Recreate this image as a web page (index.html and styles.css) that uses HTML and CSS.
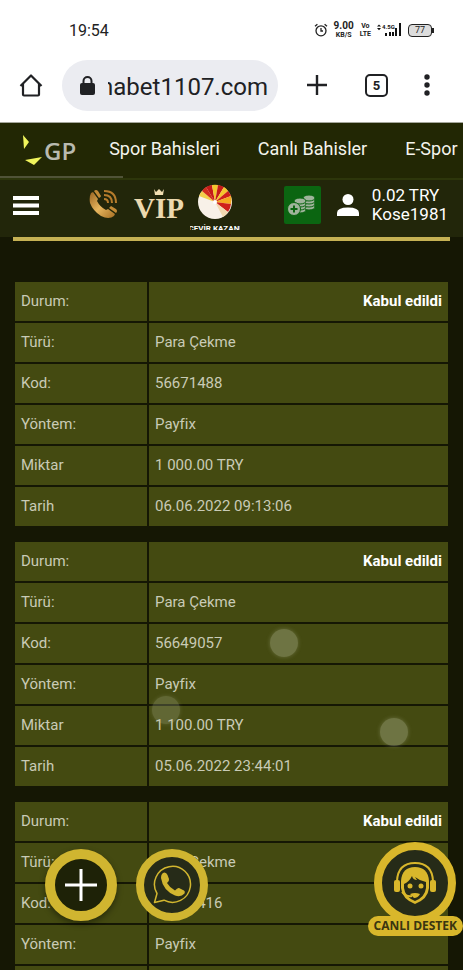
FILE: index.html
```
<!DOCTYPE html>
<html lang="tr">
<head>
    <meta charset="UTF-8">
    <meta name="viewport" content="width=device-width, initial-scale=1.0">
    <title>İşlem Geçmişi</title>
    <link rel="stylesheet" href="styles.css">
</head>
<body>
    <!-- Phone status bar -->
    <div class="status-bar">
        <span class="clock">19:54</span>
        <div class="status-icons">
            <svg class="alarm" viewBox="0 0 14 14" width="14" height="14" fill="none" stroke="#222" stroke-width="1.3">
                <circle cx="7" cy="7.8" r="5"/>
                <path d="M7 5v3h2M1 3.2 3.4 1.2M13 3.2 10.6 1.2"/>
            </svg>
            <div class="stack"><b>9.00</b><small>KB/S</small></div>
            <div class="stack lte"><small>Vo</small><small>LTE</small></div>
            <div class="signal">
                <svg viewBox="0 0 25 14" width="25" height="14" fill="#111">
                    <path d="M0 3.6 2 1.4 4 3.6ZM0 5 2 7.2 4 5ZM8 10h2v3H8zM12 9h2v4h-2zM15 9h2v4h-2zM18 5h2v8h-2zM22 0h2v13h-2z"/>
                    <text x="5" y="6" font-size="6" font-weight="700">4.5G</text>
                </svg>
            </div>
            <div class="battery">77</div>
        </div>
    </div>

    <!-- Browser toolbar -->
    <div class="browser-bar">
        <button class="icon-button home" aria-label="Home">
            <svg viewBox="0 0 24 24" width="24" height="24" fill="none" stroke="#202124" stroke-width="2.2" stroke-linejoin="round">
                <path d="M1.5 13 12 2.5 22.5 13M4 11v10.5q0 1 1 1h14q1 0 1-1V11"/>
            </svg>
        </button>
        <label class="url-box">
            <svg viewBox="0 0 15 19" width="15" height="19">
                <rect y="7" width="15" height="12" rx="2" fill="#202124"/>
                <path d="M3.5 8V5a4 4 0 0 1 8 0v3" fill="none" stroke="#202124" stroke-width="2"/>
            </svg>
            <span class="url-clip"><input class="url-input" type="text" value="nabet1107.com" aria-label="Address" readonly></span>
        </label>
        <button class="icon-button add" aria-label="New tab">
            <svg viewBox="0 0 22 22" width="22" height="22" stroke="#202124" stroke-width="2.4"><path d="M11 1v20M1 11h20"/></svg>
        </button>
        <button class="tab-count" aria-label="Tabs">5</button>
        <button class="icon-button more" aria-label="More">
            <svg viewBox="0 0 6 22" width="6" height="22" fill="#202124"><circle cx="3" cy="3" r="2.7"/><circle cx="3" cy="11" r="2.7"/><circle cx="3" cy="19" r="2.7"/></svg>
        </button>
    </div>

    <!-- Site navigation -->
    <nav class="site-nav">
        <a class="logo" href="#">
            <svg viewBox="0 0 19 32" width="19" height="32" fill="#f0f45c">
                <path d="M0 1 6 8 1 15ZM2 26 19 23 11 31Z"/>
            </svg>
            <span>GP</span>
        </a>
        <a href="#">Spor Bahisleri</a>
        <a href="#">Canlı Bahisler</a>
        <a href="#">E-Spor</a>
    </nav>

    <header class="site-header">
        <button class="icon-button menu" aria-label="Menü">
            <svg viewBox="0 0 26 19" width="26" height="19" fill="#fff"><path d="M0 0h26v4H0zM0 7.500h26v4H0zM0 15h26v4H0z"/></svg>
        </button>
        <div class="promo">
            <a class="phone" href="#" aria-label="Telefon">
                <svg viewBox="0 0 29 30" width="29" height="30">
                    <defs><linearGradient id="gold" x2="1" y2="1"><stop stop-color="#9a6420"/><stop offset=".5" stop-color="#e6b55e"/><stop offset="1" stop-color="#a66e22"/></linearGradient></defs>
                    <path d="M2 4 4 3 9 10 8 12Q11 18 17 21L19 20 26 25 25 27Q20 31 12 27 4 22 1 14 0 8 2 4Z" fill="url(#gold)"/>
                    <path d="M5 2q2-2 4 0l3 5q0 1-2 2ZM20 19l2-2 5 3q2 2 0 4Z" fill="#c28a36"/>
                    <path d="M15 10q4 0 4 4M15 6q8 0 8 8M15 2q12 0 12 12" fill="none" stroke="#b67c2c" stroke-width="2"/>
                </svg>
            </a>
            <a class="vip" href="#">
                <svg viewBox="0 0 12 6" width="12" height="6" fill="#f2dfb2"><path d="M1 0 3 3 6 0 9 3 11 0 10 6H2Z"/></svg>
                <span>VIP</span>
            </a>
            <a class="wheel" href="#">
                <svg viewBox="0 0 36 36" width="36" height="36">
                    <circle cx="18" cy="18" r="17" fill="#f8f1e8"/>
                    <path d="M18 18 2 12A17 17 0 0 1 5 7Z" fill="#f3cf4a"/>
                    <path d="M18 18 5 7A17 17 0 0 1 9 3Z" fill="#d22c1c"/>
                    <path d="M18 18 9 3A17 17 0 0 1 15 1Z" fill="#c51a18"/>
                    <path d="M18 18 15 1A17 17 0 0 1 21 1Z" fill="#f5c52c"/>
                    <path d="M18 18 21 1A17 17 0 0 1 27 3Z" fill="#c51a18"/>
                    <path d="M18 18 27 3A17 17 0 0 1 31 7Z" fill="#f5c52c"/>
                    <path d="M18 18 31 7A17 17 0 0 1 34 12Z" fill="#cf1f1a"/>
                    <path d="M18 18 34 12A17 17 0 0 1 34 20Z" fill="#f5a91f"/>
                    <path d="M18 18 34 20A17 17 0 0 1 31 28Z" fill="#cf1f1a"/>
                    <path d="M18 18 31 28A17 17 0 0 1 26 33Z" fill="#f2d9b0"/>
                    <circle cx="18" cy="18" r="2" fill="#fff"/>
                </svg>
                <span>ÇEVİR KAZAN!</span>
            </a>
        </div>
        <button class="deposit" aria-label="Para Yatır">
            <svg viewBox="0 0 30 22" width="30" height="22" fill="#9fb49b">
                <g stroke="#0b6511" stroke-width="1">
                    <ellipse cx="22" cy="13" rx="6" ry="3"/><ellipse cx="22" cy="10" rx="6" ry="3"/><ellipse cx="22" cy="7" rx="6" ry="3"/><ellipse cx="22" cy="4" rx="6" ry="3"/>
                    <ellipse cx="13" cy="16" rx="6" ry="3"/><ellipse cx="13" cy="13" rx="6" ry="3"/><ellipse cx="13" cy="10" rx="6" ry="3"/><ellipse cx="13" cy="7" rx="6" ry="3"/>
                    <circle cx="7" cy="15" r="6.500"/>
                </g>
                <path d="M7 11.500v7M3.500 15h7" stroke="#0b6511" stroke-width="2"/>
            </svg>
        </button>
        <a class="account" href="#">
            <svg viewBox="0 0 22 22" width="22" height="22" fill="#fff"><circle cx="11" cy="5.500" r="5.500"/><path d="M0 22v-3q0-5.500 11-5.500T22 19v3Z"/></svg>
            <span>0.02 TRY<br>Kose1981</span>
        </a>
    </header>

    <!-- Transaction history -->
    <main class="history">
        <table class="transaction">
            <tr><th>Durum:</th><td class="state">Kabul edildi</td></tr>
            <tr><th>Türü:</th><td>Para Çekme</td></tr>
            <tr><th>Kod:</th><td>56671488</td></tr>
            <tr><th>Yöntem:</th><td>Payfix</td></tr>
            <tr><th>Miktar</th><td>1 000.00 TRY</td></tr>
            <tr><th>Tarih</th><td>06.06.2022 09:13:06</td></tr>
        </table>
        <table class="transaction">
            <tr><th>Durum:</th><td class="state">Kabul edildi</td></tr>
            <tr><th>Türü:</th><td>Para Çekme</td></tr>
            <tr><th>Kod:</th><td>56649057</td></tr>
            <tr><th>Yöntem:</th><td>Payfix</td></tr>
            <tr><th>Miktar</th><td>1 100.00 TRY</td></tr>
            <tr><th>Tarih</th><td>05.06.2022 23:44:01</td></tr>
        </table>
        <table class="transaction">
            <tr><th>Durum:</th><td class="state">Kabul edildi</td></tr>
            <tr><th>Türü:</th><td>Para Çekme</td></tr>
            <tr><th>Kod:</th><td>56640416</td></tr>
            <tr><th>Yöntem:</th><td>Payfix</td></tr>
            <tr><th></th><td></td></tr>
        </table>
    </main>

    <!-- Drifting particles -->
    <i class="particle particle-a"></i>
    <i class="particle particle-b"></i>
    <i class="particle particle-c"></i>

    <!-- Floating buttons -->
    <button class="float-button float-add" aria-label="Aç">
        <svg viewBox="0 0 32 32" width="32" height="32" stroke="#fff" stroke-width="3"><path d="M16 0v32M0 16h32"/></svg>
    </button>
    <a class="float-button float-whatsapp" href="#" aria-label="WhatsApp">
        <svg viewBox="0 0 40 40" width="40" height="40">
            <path d="M2.500 37.500 5 28.500A18 18 0 1 1 12 35.200Z" fill="none" stroke="#d2b62f" stroke-width="1.500" stroke-linejoin="round"/>
            <path d="M9 13Q9 8 12.500 7.500 14.500 7.500 15.500 10L17 14Q17.500 16 15 18 18 23 23 25.500 25.500 22.500 27 23L32 25.500Q33.500 26.500 32.500 28.500 29 32.500 23 30.500 11 25.500 9 13Z" fill="#d2b62f"/>
        </svg>
    </a>
    <a class="support" href="#">
        <span class="support-ring">
            <svg viewBox="0 0 44 44" width="44" height="44" fill="#d9b72b">
                <path d="M4 20Q5 2 22 2T40 20" fill="none" stroke="#d9b72b" stroke-width="2"/>
                <path d="M8 20Q9 6 22 6T36 20V27Q35 38 22 43 9 38 8 27Z"/>
                <path d="M11 23Q16 21 19 15 20 19 24 19L22 16Q27 20 33 21V27Q32 36 22 40 12 36 11 27Z" fill="#262b18"/>
                <rect x="1" y="19" width="6" height="12" rx="2"/>
                <rect x="37" y="19" width="6" height="12" rx="2"/>
                <circle cx="17" cy="25" r="2.500"/>
                <circle cx="28" cy="25" r="2.500"/>
                <path d="M9 31q4 5 10 4" fill="none" stroke="#d9b72b" stroke-width="2"/>
                <path d="M17 33Q22 31 27 33 25 37 21 37Z"/>
            </svg>
        </span>
        <span class="support-label">CANLI DESTEK</span>
    </a>
</body>
</html>
```
FILE: styles.css
```
:root {
    --gold: #d0b530;
    --nav-bg: #222704;
    --cell-bg: #444a11;
    --page-bg: #151704;
}

* {
    box-sizing: border-box;
}

body {
    margin: 0;
    height: 100vh;
    display: flex;
    flex-direction: column;
    overflow: hidden;
    position: relative;
    font-family: Roboto, sans-serif;
    background: var(--page-bg);
}

a {
    color: inherit;
    text-decoration: none;
}

button {
    padding: 0;
    border: none;
    background: none;
    font-family: inherit;
    cursor: pointer;
}

svg {
    display: block;
    flex: none;
}

/* Status bar */
.status-bar {
    flex: none;
    height: 60px;
    padding: 0 31px 0 69px;
    display: flex;
    align-items: center;
    justify-content: space-between;
    background: #fff;
    color: #222;
}

.clock {
    font-size: 16px;
}

.status-icons {
    display: flex;
    align-items: center;
    gap: 6px;
}

.stack {
    display: flex;
    flex-direction: column;
    align-items: center;
}

.stack b {
    font-size: 10px;
    line-height: 10px;
}

.stack small {
    font-size: 7px;
    font-weight: 700;
    line-height: 8px;
}

.battery {
    position: relative;
    width: 24px;
    height: 13px;
    border: 1px solid #222;
    border-radius: 4px;
    background: #ddd;
    font-size: 9px;
    line-height: 11px;
    text-align: center;
}

.battery::after {
    content: '';
    position: absolute;
    right: -3px;
    top: 3px;
    width: 2px;
    height: 5px;
    background: #222;
}

/* Browser toolbar */
.browser-bar {
    flex: none;
    height: 63px;
    padding: 0 33px 12px 19px;
    display: flex;
    align-items: center;
    background: #fff;
    border-bottom: 1px solid #a5a79c;
}

.url-box {
    flex: 1;
    min-width: 0;
    height: 51px;
    margin: 0 28px 0 19px;
    padding: 0 10px 0 18px;
    display: flex;
    align-items: center;
    gap: 13px;
    border-radius: 26px;
    background: #ebecf1;
}

.url-clip {
    flex: 1;
    min-width: 0;
    display: flex;
    justify-content: flex-end;
    overflow: hidden;
}

.url-input {
    flex: none;
    width: 172px;
    padding: 3px 0 0;
    border: none;
    outline: none;
    background: none;
    color: #202124;
    font-family: inherit;
    font-size: 24px;
    text-align: right;
}

.tab-count {
    width: 23px;
    height: 23px;
    margin: 0 48px 0 37px;
    margin-right: 36px;
    border: 2px solid #202124;
    border-radius: 5px;
    color: #202124;
    font-size: 13px;
    font-weight: 700;
    line-height: 19px;
}

/* Navigation */
.site-nav {
    flex: none;
    height: 57px;
    position: relative;
    padding: 0 0 4px 23px;
    display: flex;
    align-items: center;
    gap: 38px;
    overflow: hidden;
    background: var(--nav-bg);
    border-bottom: 2px solid #2d360b;
    color: #f4f4ec;
    font-size: 18px;
    white-space: nowrap;
}

.site-nav::after {
    content: '';
    position: absolute;
    left: 0;
    bottom: 0;
    width: 123px;
    height: 2px;
    background: #505337;
}

.logo {
    display: flex;
    align-items: center;
    gap: 2px;
    margin-right: -5px;
    padding-top: 3px;
    color: #b8bab0;
    font-family: "Open Sans", sans-serif;
    font-size: 24px;
    font-weight: 600;
}

.site-header {
    flex: none;
    height: 57px;
    padding: 0 15px 7px 13px;
    display: flex;
    align-items: center;
    background: #22260a;
    color: #fff;
}

.promo {
    display: flex;
    align-items: flex-start;
    height: 50px;
    margin: 0 auto 0 50px;
}

.phone {
    margin-top: 9px;
}

.vip {
    display: flex;
    flex-direction: column;
    align-items: center;
    margin: 9px 6px 0 16px;
    font-family: "Liberation Serif", serif;
    font-size: 29px;
    font-weight: 700;
    line-height: 26px;
    color: #ecd9af;
}

.wheel {
    display: flex;
    flex-direction: column;
    align-items: center;
    width: 50px;
    height: 46px;
    margin-top: 4px;
    overflow: hidden;
    font-size: 8px;
    font-weight: 700;
    white-space: nowrap;
}

.wheel span {
    margin-top: 4px;
}

.deposit {
    display: flex;
    align-items: center;
    justify-content: center;
    width: 37px;
    height: 38px;
    margin-right: 16px;
    border-radius: 2px;
    background: #0b6511;
}

.account {
    display: flex;
    align-items: center;
    gap: 13px;
    font-size: 17px;
    line-height: 19px;
}

/* History */
.history {
    flex: 1;
    min-height: 0;
    margin: 0 13px;
    padding-top: 39px;
    border-top: 4px solid #c5b154;
    overflow: auto;
    scrollbar-width: none;
}

.transaction {
    width: 100%;
    margin-bottom: 12px;
    border-spacing: 2px;
    table-layout: fixed;
    color: #c9cbb6;
    font-size: 15px;
    line-height: 19px;
}

.transaction th,
.transaction td {
    height: 39px;
    padding: 10px 6px;
    background: var(--cell-bg);
    font-weight: 400;
    text-align: left;
}

.transaction th {
    width: 132px;
}

.transaction .state {
    color: #fff;
    font-weight: 700;
    text-align: right;
}

/* Particles */
.particle {
    position: absolute;
    width: 28px;
    height: 28px;
    border-radius: 50%;
    background: rgba(190, 195, 160, 0.35);
    box-shadow: 0 0 4px rgba(190, 195, 160, 0.3);
    pointer-events: none;
}

.particle-a {
    left: 270px;
    top: 629px;
}

.particle-b {
    left: 152px;
    top: 696px;
    opacity: 0.7;
}

.particle-c {
    left: 380px;
    top: 718px;
}

/* Floating buttons */
.float-button {
    position: absolute;
    bottom: 49px;
    width: 72px;
    height: 72px;
    display: flex;
    align-items: center;
    justify-content: center;
    border: 8px solid var(--gold);
    border-radius: 50%;
    background: #262b18;
}

.float-add {
    left: 45px;
    border-width: 10px;
    background: #1e2207;
    box-shadow: 0 3px 6px rgba(0, 0, 0, 0.4);
}

.float-whatsapp {
    left: 136px;
}

.support {
    position: absolute;
    right: 0;
    bottom: 34px;
    display: flex;
    flex-direction: column;
    align-items: center;
}

.support-ring {
    display: flex;
    align-items: center;
    justify-content: center;
    width: 82px;
    height: 82px;
    border: 8px solid #d9b72b;
    border-radius: 50%;
    background: #262b18;
}

.support-label {
    margin-top: -8px;
    padding: 0 6px;
    border-radius: 10px;
    background: #d9b72b;
    color: #3a3510;
    font-family: "Open Sans", sans-serif;
    font-size: 12px;
    font-weight: 700;
    line-height: 20px;
    white-space: nowrap;
}
```
